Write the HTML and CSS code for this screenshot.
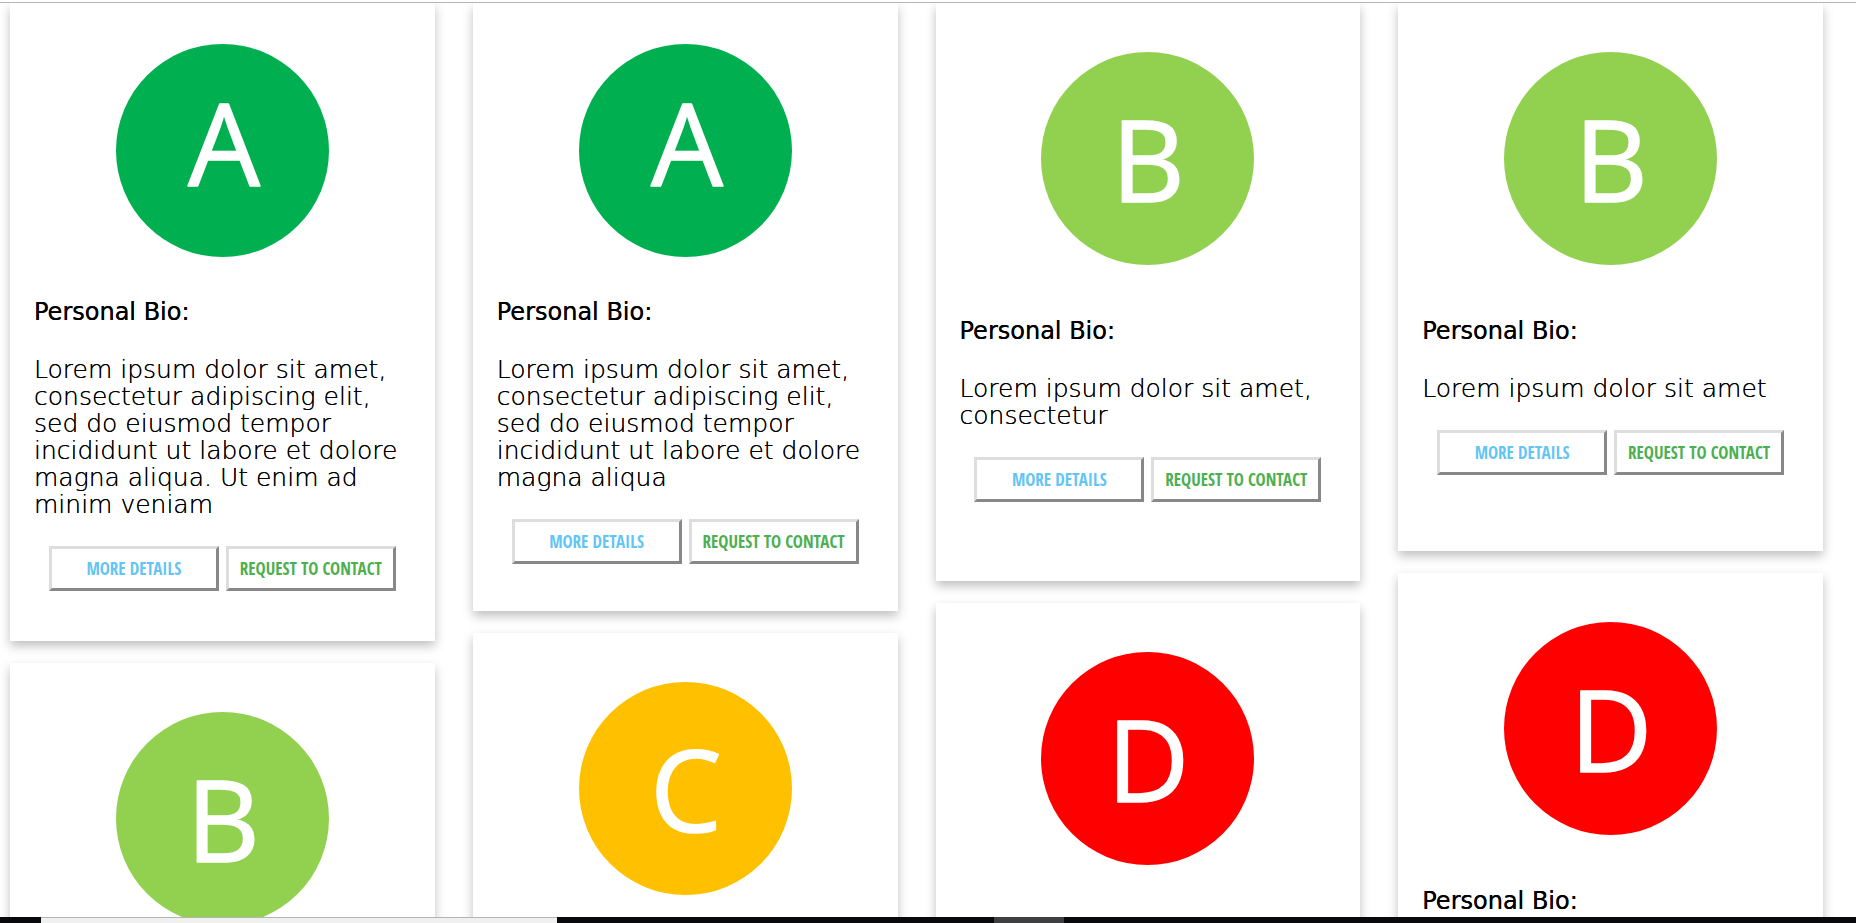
FILE: index.html
```
<!DOCTYPE html>
<html lang="en">
<head>
<meta charset="utf-8">
<title>Profiles</title>
<link rel="stylesheet" href="styles.css">
</head>
<body>
<header class="topline"></header>
<main class="board">
  <article class="card rows-22 compact">
    <svg class="badge green" viewBox="0 0 426 426" role="img" aria-label="Grade A"><circle cx="213" cy="213" r="213"/><text x="216" y="284">A</text></svg>
    <h2 class="title">Personal Bio:</h2>
    <p class="bio">Lorem ipsum dolor sit amet, consectetur adipiscing elit, sed do eiusmod tempor incididunt ut labore et dolore magna aliqua. Ut enim ad minim veniam</p>
    <div class="actions"><button class="btn details">MORE DETAILS</button><button class="btn contact">REQUEST TO CONTACT</button></div>
  </article>
  <article class="card rows-21 compact">
    <svg class="badge green" viewBox="0 0 426 426" role="img" aria-label="Grade A"><circle cx="213" cy="213" r="213"/><text x="216" y="284">A</text></svg>
    <h2 class="title">Personal Bio:</h2>
    <p class="bio">Lorem ipsum dolor sit amet, consectetur adipiscing elit, sed do eiusmod tempor incididunt ut labore et dolore magna aliqua</p>
    <div class="actions"><button class="btn details">MORE DETAILS</button><button class="btn contact">REQUEST TO CONTACT</button></div>
  </article>
  <article class="card rows-20">
    <svg class="badge lime" viewBox="0 0 426 426" role="img" aria-label="Grade B"><circle cx="213" cy="213" r="213"/><text x="214" y="299">B</text></svg>
    <h2 class="title">Personal Bio:</h2>
    <p class="bio">Lorem ipsum dolor sit amet, consectetur</p>
    <div class="actions"><button class="btn details">MORE DETAILS</button><button class="btn contact">REQUEST TO CONTACT</button></div>
  </article>
  <article class="card rows-19">
    <svg class="badge lime" viewBox="0 0 426 426" role="img" aria-label="Grade B"><circle cx="213" cy="213" r="213"/><text x="214" y="299">B</text></svg>
    <h2 class="title">Personal Bio:</h2>
    <p class="bio">Lorem ipsum dolor sit amet</p>
    <div class="actions"><button class="btn details">MORE DETAILS</button><button class="btn contact">REQUEST TO CONTACT</button></div>
  </article>
  <article class="card rows-19">
    <svg class="badge red" viewBox="0 0 426 426" role="img" aria-label="Grade D"><circle cx="213" cy="213" r="213"/><text x="214" y="299">D</text></svg>
    <h2 class="title">Personal Bio:</h2>
  </article>
  <article class="card rows-19">
    <svg class="badge red" viewBox="0 0 426 426" role="img" aria-label="Grade D"><circle cx="213" cy="213" r="213"/><text x="214" y="299">D</text></svg>
  </article>
  <article class="card rows-19">
    <svg class="badge amber" viewBox="0 0 426 426" role="img" aria-label="Grade C"><circle cx="213" cy="213" r="213"/><text x="214" y="299">C</text></svg>
  </article>
  <article class="card rows-19">
    <svg class="badge lime" viewBox="0 0 426 426" role="img" aria-label="Grade B"><circle cx="213" cy="213" r="213"/><text x="214" y="299">B</text></svg>
  </article>
</main>
<footer class="taskbar"><span class="search"></span><span class="active"></span></footer>
</body>
</html>
```
FILE: styles.css
```
* { box-sizing: border-box; }

body {
  margin: 0;
  height: 100vh;
  display: flex;
  flex-direction: column;
  overflow: hidden;
  background: #fff;
  color: #000;
  font-family: "DejaVu Sans", sans-serif;
}

.topline {
  flex: none;
  height: 3px;
  border-bottom: 1px solid #b4b4b4;
}

/* Cards span 8px rows so that each column packs on its own */
.board {
  flex: 1;
  min-height: 0;
  overflow: hidden;
  display: grid;
  grid-template-columns: repeat(4, minmax(0, 1fr));
  grid-auto-rows: 8px;
  gap: 22px 38px;
  padding: 0 33px 0 10px;
}

.card {
  padding: 49px 24px 0;
  background: #fff;
  box-shadow: 0 5px 10px 0 rgba(0, 0, 0, 0.25);
}

.compact { padding-top: 41px; }
.rows-19 { grid-row: span 19; }
.rows-20 { grid-row: span 20; }
.rows-21 { grid-row: span 21; }
.rows-22 { grid-row: span 22; }

.badge {
  display: block;
  width: 213px;
  height: 213px;
  margin: 0 auto 53px;
}

.compact .badge { margin-bottom: 42px; }

.badge text {
  fill: #fff;
  stroke: #fff;
  stroke-width: 3px;
  stroke-linejoin: round;
  font-family: "Open Sans", sans-serif;
  font-size: 228px;
  text-anchor: middle;
}

.green { fill: #00b050; }
.lime { fill: #92d050; }
.amber { fill: #ffc000; }
.red { fill: #f00; }

.title {
  margin: 0 0 30px;
  font-size: 24px;
  line-height: 27px;
  font-weight: 400;
  text-shadow: 0 0 0 #000;
}

.bio {
  margin: 0 0 28px;
  font-size: 25px;
  line-height: 27px;
  font-weight: 200;
  text-shadow: 0 0 0 #000;
}

.actions {
  display: flex;
  justify-content: center;
  gap: 7px;
}

.btn {
  width: 170px;
  height: 45px;
  padding: 0;
  border: 3px solid;
  border-color: #ddd #888 #888 #ddd;
  background: #fff;
  font: 700 17px "Open Sans Condensed", "Roboto Condensed", sans-serif;
  white-space: nowrap;
}

.details { color: #63c5f5; }
.contact { color: #4caf50; }

.taskbar {
  flex: none;
  display: flex;
  height: 6px;
  padding-left: 41px;
  background: #08090c;
}

.search {
  width: 516px;
  border-top: 1px solid #b4b4b4;
  background: #f0f0f0;
}

.active {
  width: 70px;
  margin-left: 437px;
  background: #3e3f41;
}
```
